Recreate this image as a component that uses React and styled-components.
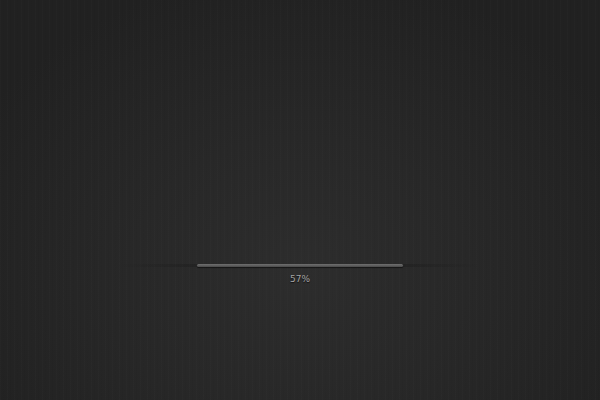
import React from 'react';
import styled, { createGlobalStyle } from 'styled-components';

const GlobalStyle = createGlobalStyle`
    html, body {
        margin: 0;
        padding: 0;
        height: 100%;
        background: #222;
    }
    #root {
        height: 100%;
    }
`;

function App() {
    const progress = 57;
    return (
        <>
            <GlobalStyle />
            <Screen>
                <Loader>
                    <Track>
                        <Fill style={{ width: `${progress}%` }} />
                    </Track>
                    <Percent>{progress}%</Percent>
                </Loader>
            </Screen>
        </>
    );
}

export default App;

// Style Components

const Screen = styled.div`
    box-sizing: border-box;
    width: 100%;
    height: 100vh;
    padding-top: 264px;
    display: flex;
    flex-direction: column;
    align-items: center;
    background:
        repeating-linear-gradient(90deg, rgba(255, 255, 255, 0.012) 0 1px, transparent 1px 3px, rgba(0, 0, 0, 0.025) 3px 4px, transparent 4px 7px),
        radial-gradient(ellipse 62% 75% at 50% 68%, #2d2d2d 0%, #282828 45%, #212121 100%);
    overflow: hidden;
`;

const Loader = styled.div`
    width: 362px;
    display: flex;
    flex-direction: column;
    align-items: center;
    gap: 6px;
`;

const Track = styled.div`
    width: 100%;
    height: 3px;
    display: flex;
    justify-content: center;
    align-items: center;
    background: linear-gradient(90deg, rgba(16, 16, 16, 0) 0%, rgba(16, 16, 16, 0.3) 25%, rgba(16, 16, 16, 0.3) 75%, rgba(16, 16, 16, 0) 100%);
`;

const Fill = styled.div`
    height: 3px;
    border-radius: 2px;
    background: linear-gradient(180deg, #707070 0%, #5a5a5a 60%, #4a4a4a 100%);
    box-shadow: 0 1px 1px rgba(0, 0, 0, 0.5);
`;

const Percent = styled.span`
    font-family: "DejaVu Sans", "Liberation Sans", sans-serif;
    font-size: 9px;
    line-height: 12px;
    color: #a4a4a4;
    text-shadow: 0 1px 1px rgba(0, 0, 0, 0.7);
`;
